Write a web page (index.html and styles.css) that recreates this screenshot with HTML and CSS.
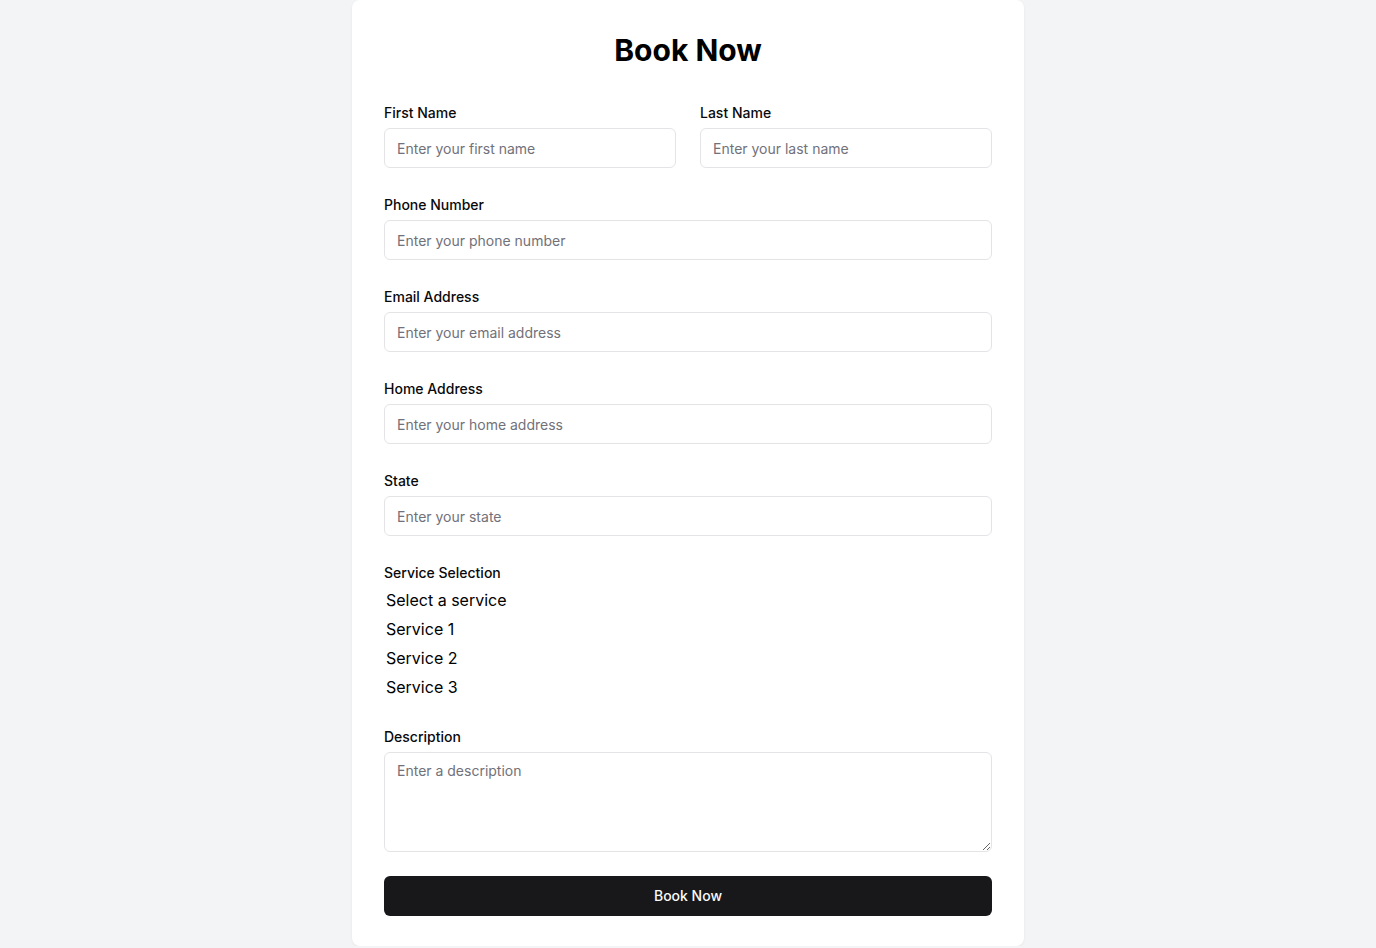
FILE: index.html
```html
<!DOCTYPE html>
<html lang="en">
<head>
<meta charset="utf-8">
<title>Book Now</title>
<link rel="stylesheet" href="styles.css">
</head>
<body>
<main class="page">
  <section class="card">
    <h1 class="title">Book Now</h1>
    <form class="form">
      <div class="row">
        <div class="field">
          <label class="label" for="first">First Name</label>
          <input class="input" id="first" type="text" placeholder="Enter your first name">
        </div>
        <div class="field">
          <label class="label" for="last">Last Name</label>
          <input class="input" id="last" type="text" placeholder="Enter your last name">
        </div>
      </div>
      <div class="field">
        <label class="label" for="phone">Phone Number</label>
        <input class="input" id="phone" type="tel" placeholder="Enter your phone number">
      </div>
      <div class="field">
        <label class="label" for="email">Email Address</label>
        <input class="input" id="email" type="email" placeholder="Enter your email address">
      </div>
      <div class="field">
        <label class="label" for="home">Home Address</label>
        <input class="input" id="home" type="text" placeholder="Enter your home address">
      </div>
      <div class="field">
        <label class="label" for="state">State</label>
        <input class="input" id="state" type="text" placeholder="Enter your state">
      </div>
      <div class="field field-service">
        <label class="label label-service">Service Selection</label>
        <div class="options" role="listbox">
          <div class="option" role="option">Select a service</div>
          <div class="option" role="option">Service 1</div>
          <div class="option" role="option">Service 2</div>
          <div class="option" role="option">Service 3</div>
        </div>
      </div>
      <div class="field">
        <label class="label" for="desc">Description</label>
        <textarea class="textarea" id="desc" placeholder="Enter a description"></textarea>
      </div>
      <button class="button" type="button">Book Now</button>
    </form>
  </section>
</main>
</body>
</html>
```
FILE: styles.css
```css
* { box-sizing: border-box; }
html, body { margin: 0; padding: 0; }
body {
  background: #f3f4f6;
  font-family: Inter, "Noto Sans", "Liberation Sans", sans-serif;
  color: #09090b;
}
.page {
  display: flex;
  justify-content: center;
}
.card {
  width: 672px;
  background: #ffffff;
  border-radius: 8px;
  padding: 32px 32px 30px;
  box-shadow: 0 1px 3px rgba(0,0,0,0.06);
}
.title {
  margin: 0 0 32px;
  font-size: 30px;
  line-height: 36px;
  font-weight: 700;
  text-align: center;
  color: #000;
}
.form {
  display: flex;
  flex-direction: column;
  gap: 24px;
}
.row {
  display: grid;
  grid-template-columns: 1fr 1fr;
  gap: 24px;
}
.field {
  display: flex;
  flex-direction: column;
}
.label {
  font-size: 14px;
  line-height: 20px;
  font-weight: 500;
  padding-top: 3px;
  margin-bottom: 5px;
  color: #09090b;
}
.label-service { margin-bottom: 3px; }
.input, .textarea {
  width: 100%;
  height: 40px;
  border: 1px solid #e4e4e7;
  border-radius: 6px;
  padding: 0 12px;
  font-family: inherit;
  font-size: 14px;
  color: #09090b;
  background: #fff;
  outline: none;
}
.input::placeholder, .textarea::placeholder { color: #71717a; }
.textarea {
  height: 100px;
  padding: 8px 12px;
  line-height: 20px;
  resize: vertical;
}
.options {
  display: flex;
  flex-direction: column;
  margin-bottom: -2px;
}
.option {
  height: 29px;
  line-height: 29px;
  padding-left: 2px;
  font-size: 16px;
  color: #000;
}
.button {
  height: 40px;
  border: none;
  border-radius: 6px;
  background: #18181b;
  color: #fafafa;
  font-family: inherit;
  font-size: 14px;
  font-weight: 500;
  line-height: 20px;
  padding-bottom: 2px;
  cursor: pointer;
}
```
